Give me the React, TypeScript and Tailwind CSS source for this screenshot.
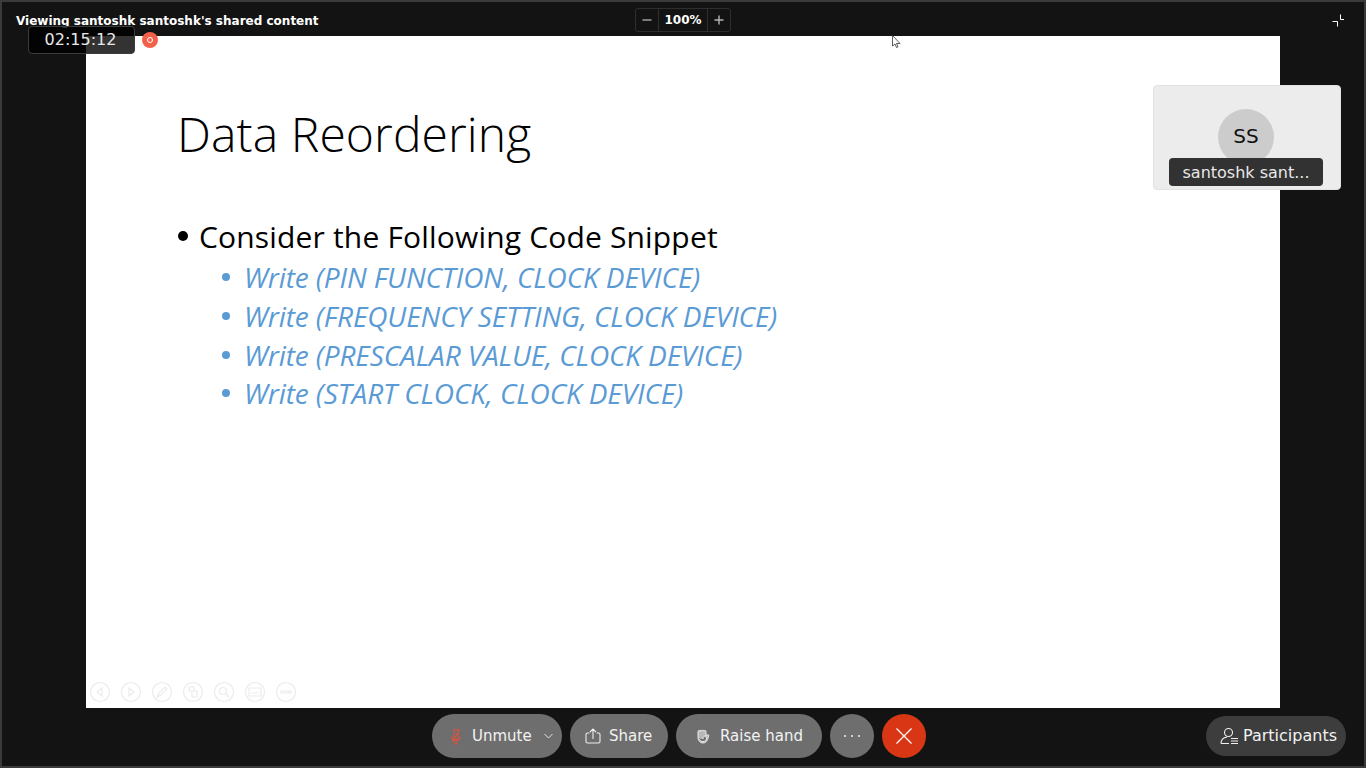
import React from "react";

const ui = { fontFamily: '"DejaVu Sans", sans-serif' };
const slide = { fontFamily: '"Open Sans", "Noto Sans", sans-serif' };

const items = [
  "Write (PIN FUNCTION, CLOCK DEVICE)",
  "Write (FREQUENCY SETTING, CLOCK DEVICE)",
  "Write (PRESCALAR VALUE, CLOCK DEVICE)",
  "Write (START CLOCK, CLOCK DEVICE)",
];

function Ghost({ children }: { children: React.ReactNode }) {
  return (
    <svg width="22" height="22" viewBox="0 0 22 22" fill="none" stroke="#ebebeb" strokeWidth="1.2">
      <circle cx="11" cy="11" r="9.5" />
      {children}
    </svg>
  );
}

export default function App() {
  return (
    <div
      className="relative flex h-[768px] w-[1366px] flex-col overflow-hidden border-2 border-[#3a3a3a] bg-[#131313] text-white"
      style={ui}
    >
      <div className="relative flex h-[34px] shrink-0 items-start">
        <div className="pl-[14px] pt-[12px] text-[12px] font-bold leading-[15px] text-white">
          Viewing santoshk santoshk's shared content
        </div>
        <div className="absolute left-[633px] top-[6px] flex h-[24px] w-[96px] items-center rounded-[3px] border border-[#2e2e2e] text-[12px] font-bold">
          <div className="flex h-full w-[23px] items-center justify-center border-r border-[#2e2e2e]">
            <svg width="10" height="10" viewBox="0 0 10 10" stroke="#a8a8a8" strokeWidth="1.4"><path d="M0.5 5h9" /></svg>
          </div>
          <div className="flex h-full w-[49px] items-center justify-center border-r border-[#2e2e2e]">100%</div>
          <div className="flex h-full flex-1 items-center justify-center">
            <svg width="10" height="10" viewBox="0 0 10 10" stroke="#b4b4b4" strokeWidth="1.4"><path d="M0.5 5h9M5 0.5v9" /></svg>
          </div>
        </div>
        <svg className="absolute left-[1330px] top-[12px]" width="14" height="13" viewBox="0 0 14 13" fill="none" stroke="#fff" strokeWidth="1">
          <path d="M0.5 7.5h5v5M8.5 0.5v5h3.5" />
        </svg>
      </div>

      <div className="flex min-h-0 flex-1 justify-center">
        <div className="relative flex h-[672px] w-[1194px] flex-col bg-white pl-[91px] text-black" style={slide}>
          <div className="mt-[63px] text-[48px] font-light leading-[70px] tracking-[0.1px] text-black">Data Reordering</div>
          <div className="mt-[45px] flex h-[44px] items-center pl-[1px] text-[30px] tracking-[0.17px]">
            <span className="mr-[11px] h-[10px] w-[10px] rounded-full bg-black" />
            Consider the Following Code Snippet
          </div>
          <ul className="flex flex-col pl-[45px]">
            {items.map((t) => (
              <li key={t} className="flex h-[38.67px] items-center text-[28px] italic tracking-[-0.1px] text-[#5b9bd5]">
                <span className="mr-[14px] h-[8px] w-[8px] rounded-full bg-[#5b9bd5]" />
                {t}
              </li>
            ))}
          </ul>
          <div className="mt-auto mb-[5px] -ml-[88px] flex gap-[9px]">
            <Ghost><path d="M13 7l-5 4 5 4z" /></Ghost>
            <Ghost><path d="M9 7l5 4-5 4z" /></Ghost>
            <Ghost><path d="M6 16l2-4 6-6 2 2-6 6z" /></Ghost>
            <Ghost><path d="M7 6h5v4H7zM10 10h5v6h-5z" /></Ghost>
            <Ghost><circle cx="10" cy="10" r="3.5" /><path d="M13 13l3 3" /></Ghost>
            <Ghost><path d="M5 7h12v8H5zM7 12h8" /></Ghost>
            <Ghost><path d="M6 10h10v2H6zM9 10v2M13 10v2" /></Ghost>
          </div>
        </div>
      </div>

      <div className="relative flex h-[58px] shrink-0 items-start justify-center gap-[8px] pr-[8px] pt-[6px] text-[15px] text-[#f2f2f2]">
        <div className="flex h-[44px] w-[130px] items-center rounded-full bg-[#6e6e6e] pl-[18px]">
          <svg width="12" height="17" viewBox="0 0 14 20" fill="none" stroke="#e0533c" strokeWidth="1.2">
            <path d="M4.500 4a2.500 2.500 0 0 1 5 0v7a2.500 2.500 0 0 1-5 0zM2 10c0 6.500 10 6.500 10 0M7 15.500v2.500M4.500 18.500h5M2.500 17L11.500 1.500" />
          </svg>
          <span className="ml-[10px]">Unmute</span>
          <svg className="ml-[12px]" width="9" height="6" viewBox="0 0 9 6" fill="none" stroke="#e4e4e4" strokeWidth="1"><path d="M0.500 1l4 4 4-4" /></svg>
        </div>
        <div className="flex h-[44px] w-[98px] items-center rounded-full bg-[#6e6e6e] pl-[15px]">
          <svg width="16" height="16" viewBox="0 0 16 16" fill="none" stroke="#efefef" strokeWidth="1.1">
            <path d="M4.500 5H2.500Q1 5 1 6.500v7Q1 15 2.500 15h11q1.500 0 1.500-1.500v-7Q15 5 13.500 5H11.500M8 11V1.500M5 4l3-3 3 3" />
          </svg>
          <span className="ml-[8px]">Share</span>
        </div>
        <div className="flex h-[44px] w-[146px] items-center rounded-full bg-[#6e6e6e] pl-[20px]">
          <svg width="14" height="16" viewBox="0 0 14 16" fill="#b8b8b8" stroke="#e8e8e8" strokeWidth="1">
            <path d="M2 9V3.500a1 1 0 0 1 2 0 1 1 0 0 1 2-.5 1 1 0 0 1 2 .5 1 1 0 0 1 2 0V8l1.500-1.200c1-.5 1.600.3 1 1.200C12 11 11 15 7 15c-3 0-5-2.500-5-6z" />
            <path d="M2.500 10.500c2 4 7 4 8 .5L10 8c-2 0-3 1-3 3" fill="#6e6e6e" stroke="#f2f2f2" strokeWidth="0.900" />
          </svg>
          <span className="ml-[10px]">Raise hand</span>
        </div>
        <div className="flex h-[44px] w-[44px] items-center justify-center rounded-full bg-[#6e6e6e]">
          <svg width="18" height="4" viewBox="0 0 18 4" fill="#eee"><circle cx="2" cy="2" r="1" /><circle cx="9" cy="2" r="1" /><circle cx="16" cy="2" r="1" /></svg>
        </div>
        <div className="flex h-[44px] w-[44px] items-center justify-center rounded-full bg-[#d93616]">
          <svg width="18" height="18" viewBox="0 0 18 18" stroke="#fff" strokeWidth="1.300"><path d="M1.500 1.500l15 15M16.500 1.500l-15 15" /></svg>
        </div>
        <div className="absolute left-[1204px] top-[8px] flex h-[40px] w-[140px] items-center rounded-full bg-[#3d3d3d] pl-[14px] text-[16px]">
          <svg width="20" height="18" viewBox="0 0 20 18" fill="none" stroke="#f0f0f0" strokeWidth="1.100">
            <circle cx="8.500" cy="5.500" r="4" />
            <path d="M1 16.500c0-4 3-6 6-6.500M1 16.500h8M11 11.500h7M11 14h7M11 16.500h7" />
          </svg>
          <span className="ml-[3px]">Participants</span>
        </div>
      </div>

      <div className="absolute left-[26px] top-[24px] flex h-[28px] w-[107px] items-center justify-center rounded-[4px] border border-[#3c3c3c] bg-black/80 pr-[2px] text-[16px] text-[#e8e8e8]">
        02:15:12
      </div>
      <div className="absolute left-[140px] top-[30px] flex h-[16px] w-[16px] items-center justify-center rounded-full bg-[#f2624a]">
        <span className="h-[6px] w-[6px] rounded-full border border-white" />
      </div>

      <div className="absolute left-[1151px] top-[83px] flex h-[105px] w-[188px] flex-col items-center rounded-[4px] border border-[#e2e2e2] bg-[#ececec]">
        <div className="mr-[2px] mt-[23px] flex h-[56px] w-[56px] items-center justify-center rounded-full bg-[#cccccc] pb-[2px] text-[20px] text-[#111]">SS</div>
        <div className="absolute left-[15px] top-[72px] flex h-[28px] w-[154px] items-center justify-center rounded-[4px] bg-[#323232] pt-[1px] text-[16px] text-[#e8e8e8]">
          santoshk sant...
        </div>
      </div>

      <svg className="absolute left-[890px] top-[33px]" width="10" height="15" viewBox="0 0 10 15" fill="#fff" stroke="#333" strokeWidth="0.800">
        <path d="M0.500 0.500v10.500l2.500-2 1.500 3.500 1.500-.7-1.500-3.300h3.500z" />
      </svg>
    </div>
  );
}
